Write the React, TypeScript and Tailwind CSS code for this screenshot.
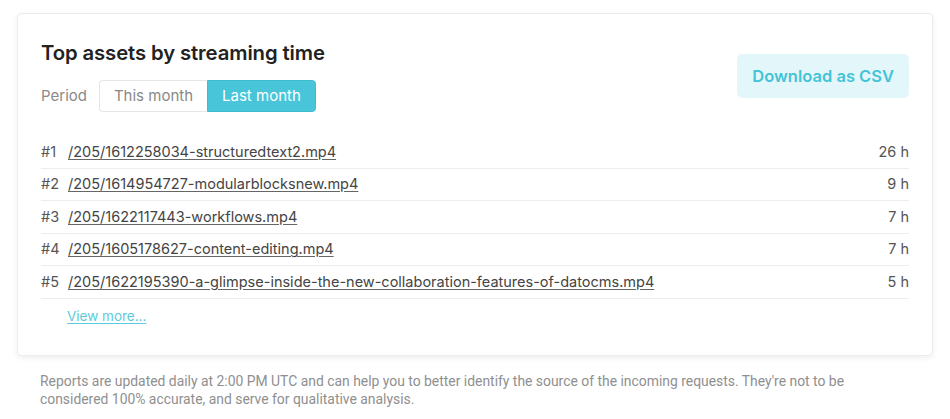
import React from 'react';

const assets = [
  { path: '/205/1612258034-structuredtext2.mp4', time: '26 h' },
  { path: '/205/1614954727-modularblocksnew.mp4', time: '9 h' },
  { path: '/205/1622117443-workflows.mp4', time: '7 h' },
  { path: '/205/1605178627-content-editing.mp4', time: '7 h' },
  { path: '/205/1622195390-a-glimpse-inside-the-new-collaboration-features-of-datocms.mp4', time: '5 h' },
];

const App: React.FC = () => {
  return (
    <div className="min-h-screen bg-white pt-[13px] pl-[17px]" style={{ fontFamily: 'Inter, "Noto Sans", sans-serif' }}>
      {/* --- Card --- */}
      <div className="w-[916px] bg-white rounded-[5px] border border-[#ececec] shadow-[0_2px_6px_rgba(0,0,0,0.07)] px-[23px] pt-[26px] pb-[28px]">
        <div className="flex justify-between items-center">
          <div>
            <h2 className="text-[20.3px] leading-[26px] font-semibold text-[#222] tracking-[-0.1px]">Top assets by streaming time</h2>
            <div className="flex items-center mt-[14px]">
              <span className="text-[15px] text-[#8a8a8a] mr-[12px]">Period</span>
              <div className="flex h-[32px] text-[15px]">
                <button className="px-[14px] border border-[#e6e6e6] border-r-0 rounded-l-[4px] text-[#888] bg-white">This month</button>
                <button className="px-[14px] rounded-r-[4px] bg-[#48c5d8] text-white border border-[#3fbbd0]">Last month</button>
              </div>
            </div>
          </div>
          <button className="h-[44px] px-[15px] rounded-[5px] bg-[#e3f7fb] text-[#45c3d6] text-[16.5px] font-semibold">
            Download as CSV
          </button>
        </div>

        {/* --- List --- */}
        <div className="mt-[24px]">
          {assets.map((a, i) => (
            <div key={a.path} className="flex items-center justify-between h-[32.5px] border-b border-[#ededed] text-[14.5px]">
              <div className="flex items-center">
                <span className="text-[#555] w-[27px]">#{i + 1}</span>
                <a href="#" className="text-[#444] underline underline-offset-2 decoration-[#666]">{a.path}</a>
              </div>
              <span className="text-[#555]">{a.time}</span>
            </div>
          ))}
          <a href="#" className="inline-block mt-[7px] ml-[26px] text-[13.5px] text-[#5ccbdc] underline underline-offset-2">View more...</a>
        </div>
      </div>

      {/* --- Footer note --- */}
      <p className="w-[850px] ml-[23px] mt-[16px] text-[13.9px] leading-[18px] text-[#8f8f8f]" style={{ fontFamily: 'Roboto, sans-serif' }}>
        Reports are updated daily at 2:00 PM UTC and can help you to better identify the source of the incoming requests. They're not to be considered 100% accurate, and serve for qualitative analysis.
      </p>
    </div>
  );
};

export default App;
